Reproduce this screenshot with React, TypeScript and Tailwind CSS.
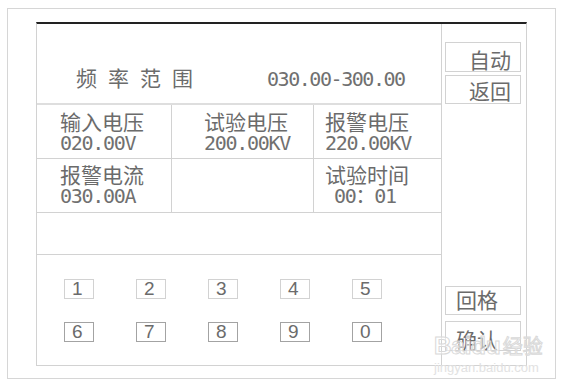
import React from 'react';

const cjk = "font-['Noto_Sans_CJK_SC',sans-serif]";
const mono = "font-['DejaVu_Sans_Mono','Noto_Sans_CJK_SC',monospace]";

function Cell({ label, value, className, valueClass }: { label?: string; value?: string; className?: string; valueClass?: string }) {
  return (
    <div className={className}>
      {label && <div className={`${cjk} text-[21px] leading-[22px]`}>{label}</div>}
      {value && (
        <div className={`${mono} mt-[1px] text-[20px] leading-[20px] tracking-[-1.3px] text-[#707070] ${valueClass ?? ''}`}>{value}</div>
      )}
    </div>
  );
}

function Key({ n, dark }: { n: string; dark?: boolean }) {
  return (
    <div
      className={`w-[30px] h-[20px] border pl-[7px] font-['Liberation_Sans',sans-serif] text-[19px] leading-[18px] ${
        dark ? 'border-[#a3a3a3]' : 'border-[#d2d2d2]'
      }`}
    >
      {n}
    </div>
  );
}

export default function App() {
  return (
    <div className="relative w-[566px] h-[386px] bg-white text-[#6b6b6b] overflow-hidden">
      {/* outer frame */}
      <div className="ml-[7px] mt-[8px] w-[549px] h-[371px] border border-[#d6d6d6] pl-[28px] pt-[13px]">
        {/* screen panel */}
        <div className="flex w-[491px] h-[344px] border-t-2 border-t-[#222] border-x border-b border-[#d2d2d2]">
          {/* main column */}
          <div className="w-[405px] border-r border-[#d2d2d2] flex flex-col">
            <div className="h-[81px] border-b-2 border-[#dedede] pt-[41px] flex items-baseline">
              <span className={`${cjk} w-[230px] pl-[39px] text-[21px] leading-[24px] tracking-[11px]`}>频率范围</span>
              <span className={`${mono} text-[20px] leading-[24px] tracking-[-1.45px] text-[#707070]`}>030.00-300.00</span>
            </div>
            <div className="grid grid-cols-[135px_142px_1fr]">
              <Cell className="h-[54px] border-b border-r border-[#d2d2d2] pl-[23px] pt-[5px]" label="输入电压" value="020.00V" />
              <Cell className="h-[54px] border-b border-r border-[#d2d2d2] pl-[32px] pt-[5px]" label="试验电压" value="200.00KV" />
              <Cell className="h-[54px] border-b border-[#d2d2d2] pl-[11px] pt-[5px]" label="报警电压" value="220.00KV" />
              <Cell className="h-[54px] border-b border-r border-[#d2d2d2] pl-[23px] pt-[4px]" label="报警电流" value="030.00A" />
              <div className="h-[54px] border-b border-r border-[#d2d2d2]" />
              <Cell className="h-[54px] border-b border-[#d2d2d2] pl-[11px] pt-[4px]" label="试验时间" value="00：01" valueClass="pl-[9px] tracking-[-0.6px]" />
            </div>
            <div className="h-[42px] border-b border-[#d2d2d2]" />
            <div className="flex flex-col gap-[23px] pl-[27px] pt-[24px]">
              <div className="flex gap-[42px]">
                {['1', '2', '3', '4', '5'].map((n) => (
                  <Key key={n} n={n} />
                ))}
              </div>
              <div className="flex gap-[42px]">
                {['6', '7', '8', '9', '0'].map((n) => (
                  <Key key={n} n={n} dark />
                ))}
              </div>
            </div>
          </div>

          {/* side buttons */}
          <div className={`w-[84px] flex flex-col pl-[3px] pt-[18px] ${cjk} text-[21px] leading-[22px]`}>
            <div className="w-[76px] h-[30px] border border-[#d2d2d2] flex justify-end pr-[9px] pt-[5px]">自动</div>
            <div className="mt-[3px] w-[76px] h-[29px] border border-[#d2d2d2] flex justify-end pr-[9px] pt-[3px]">返回</div>
            <div className="mt-[182px] w-[76px] h-[29px] border border-[#d2d2d2] pl-[10px] pt-[1px]">回格</div>
            <div className="mt-[6px] w-[76px] h-[30px] border border-[#d2d2d2] pl-[10px] pt-[6px]">确认</div>
          </div>
        </div>
      </div>

      {/* watermark */}
      <div className="absolute left-[434px] top-[334px] flex flex-col items-start pointer-events-none select-none">
        <div className="flex items-baseline leading-[24px]">
          <span className="font-['Liberation_Sans',sans-serif] font-bold text-[24px] text-white/50 [-webkit-text-stroke:1px_#d9d9d9]">Baidu</span>
          <span className={`${cjk} ml-[2px] text-[20px] text-white/50 [-webkit-text-stroke:1px_#d9d9d9]`}>经验</span>
        </div>
        <div className="mt-[3px] font-['Liberation_Sans',sans-serif] text-[13px] leading-[14px] text-[#e2e2e2]">jingyan.baidu.com</div>
      </div>
    </div>
  );
}
